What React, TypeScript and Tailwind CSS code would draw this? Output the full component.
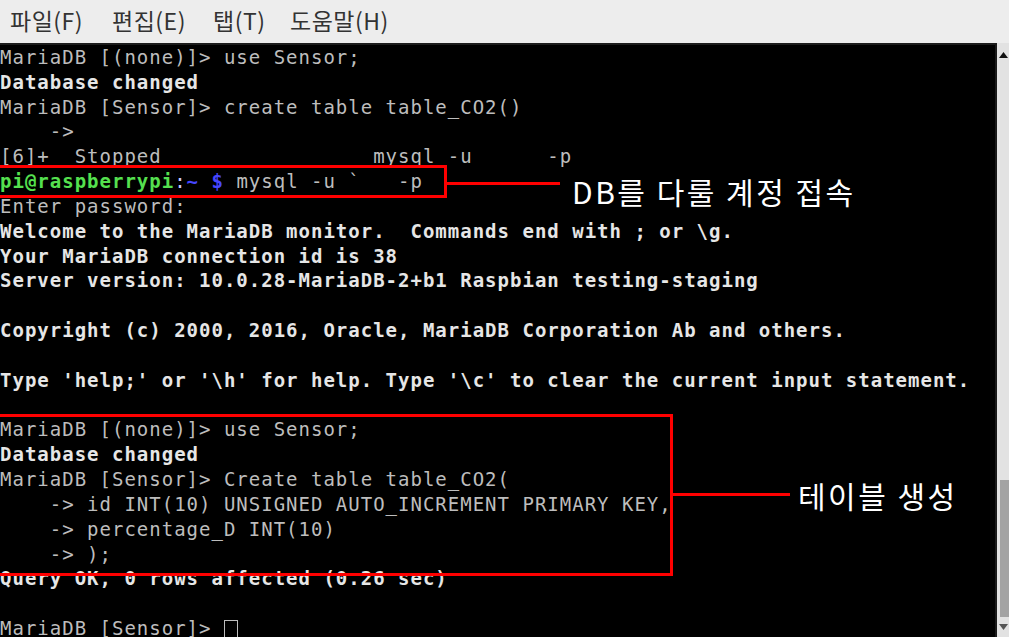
import React from "react";

type Line = { text: string; bold?: boolean };

const before: Line[] = [
  { text: "MariaDB [(none)]> use Sensor;" },
  { text: "Database changed", bold: true },
  { text: "MariaDB [Sensor]> create table table_CO2()" },
  { text: "    ->" },
  { text: "[6]+  Stopped                 mysql -u      -p" },
];

const after: Line[] = [
  { text: "Enter password:" },
  { text: "Welcome to the MariaDB monitor.  Commands end with ; or \\g.", bold: true },
  { text: "Your MariaDB connection id is 38", bold: true },
  { text: "Server version: 10.0.28-MariaDB-2+b1 Raspbian testing-staging", bold: true },
  { text: "" },
  { text: "Copyright (c) 2000, 2016, Oracle, MariaDB Corporation Ab and others.", bold: true },
  { text: "" },
  { text: "Type 'help;' or '\\h' for help. Type '\\c' to clear the current input statement.", bold: true },
  { text: "" },
  { text: "MariaDB [(none)]> use Sensor;" },
  { text: "Database changed", bold: true },
  { text: "MariaDB [Sensor]> Create table table_CO2(" },
  { text: "    -> id INT(10) UNSIGNED AUTO_INCREMENT PRIMARY KEY," },
  { text: "    -> percentage_D INT(10)" },
  { text: "    -> );" },
  { text: "Query OK, 0 rows affected (0.26 sec)", bold: true },
  { text: "" },
];

function TermLine({ line }: { line: Line }) {
  return (
    <div className={line.bold ? "h-[24.83px] font-bold text-[#e6e6e6]" : "h-[24.83px] text-[#bdbdbd]"}>
      {line.text}
    </div>
  );
}

export default function App() {
  return (
    <div className="w-[1009px] h-[637px] overflow-hidden bg-[#ededed] flex flex-col">
      <nav
        className="h-[43px] shrink-0 flex items-center pl-[10px] pb-[3px] text-[23px] tracking-[0.5px] text-[#333333]"
        style={{ fontFamily: '"Noto Sans CJK KR", "Noto Sans", sans-serif' }}
      >
        <span className="w-[102px]">파일(F)</span>
        <span className="w-[101px]">편집(E)</span>
        <span className="w-[77px]">탭(T)</span>
        <span>도움말(H)</span>
      </nav>

      <div className="flex flex-1 min-h-0">
        <div
          className="relative flex-1 bg-black border-t-2 border-[#1c1c1c] overflow-hidden whitespace-pre text-[19px] leading-[24.83px] tracking-[1px]"
          style={{ fontFamily: '"DejaVu Sans Mono", "Liberation Mono", monospace' }}
        >
          {before.map((l, i) => (
            <TermLine key={"b" + i} line={l} />
          ))}
          <div className="h-[24.83px] text-[#bdbdbd]">
            <span className="font-bold text-[#55e04f]">pi@raspberrypi</span>
            <span className="text-[#c8c8ff]">:</span>
            <span className="font-bold text-[#4646ff]">~ $</span>
            {" mysql -u `   -p"}
          </div>
          {after.map((l, i) => (
            <TermLine key={"a" + i} line={l} />
          ))}
          <div className="h-[24.83px] text-[#bdbdbd]">
            {"MariaDB [Sensor]> "}
            <span className="inline-block w-[14px] h-[20px] border border-[#bdbdbd] align-middle" />
          </div>

          {/* annotation 1 */}
          <div className="absolute left-[-3px] top-[120px] w-[450px] h-[33px] border-[3px] border-[#ff0000]" />
          <div className="absolute left-[447px] top-[137px] w-[113px] h-[3px] bg-[#ff0000]" />
          <div
            className="absolute left-[572px] top-[130px] text-[30px] leading-[32px] tracking-[2.5px] text-white"
            style={{ fontFamily: '"Noto Sans CJK KR", "Noto Sans", sans-serif' }}
          >
            DB를 다룰 계정 접속
          </div>

          {/* annotation 2 */}
          <div className="absolute left-[-3px] top-[369px] w-[676px] h-[162px] border-[3px] border-[#ff0000]" />
          <div className="absolute left-[673px] top-[448px] w-[117px] h-[3px] bg-[#ff0000]" />
          <div
            className="absolute left-[798px] top-[434px] text-[30px] leading-[32px] tracking-[2.5px] text-white"
            style={{ fontFamily: '"Noto Sans CJK KR", "Noto Sans", sans-serif' }}
          >
            테이블 생성
          </div>
        </div>

        <div className="w-[14px] shrink-0 border-l-2 border-[#1a1a1a] bg-[#e2e2e2] flex flex-col">
          <div className="h-[15px] flex items-end justify-center">
            <svg width="9" height="6" viewBox="0 0 9 6">
              <path d="M0 6 L4.5 0 L9 6 Z" fill="#111" />
            </svg>
          </div>
          <div className="flex-1" />
          <div className="h-[137px] ml-[3px] bg-[#a3a3a3]" />
          <div className="h-[3px]" />
          <div className="h-[17px] flex items-start justify-center pt-[4px]">
            <svg width="9" height="6" viewBox="0 0 9 6">
              <path d="M0 0 L9 0 L4.5 6 Z" fill="#555" />
            </svg>
          </div>
        </div>
      </div>
    </div>
  );
}
